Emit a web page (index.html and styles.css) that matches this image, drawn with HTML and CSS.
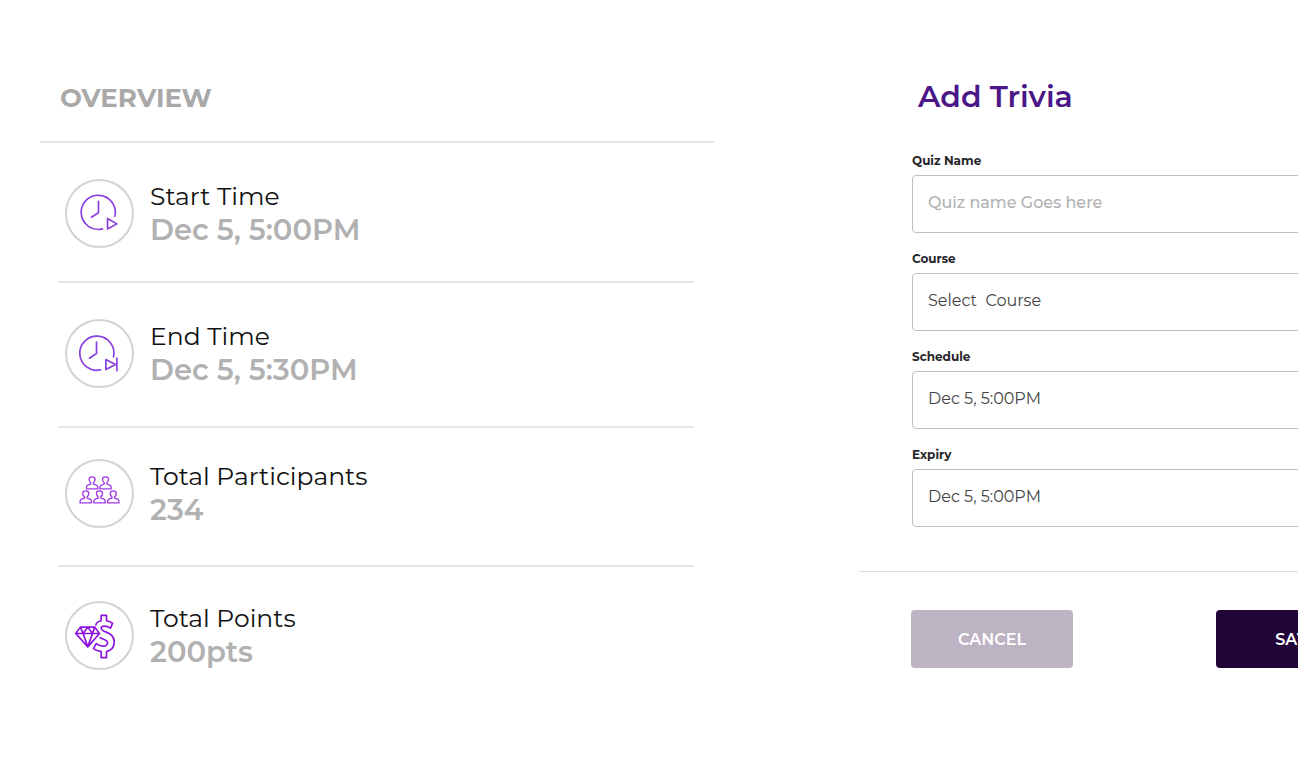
FILE: index.html
```
<!DOCTYPE html>
<html lang="en">
<head>
    <meta charset="UTF-8">
    <meta name="viewport" content="width=device-width, initial-scale=1.0">
    <title>Add Trivia</title>
    <link rel="stylesheet" href="styles.css">
</head>
<body>
    <main class="page">
        <section class="overview">
            <h2 class="overview-title">OVERVIEW</h2>

            <ul class="overview-list">
                <li class="overview-item">
                    <svg class="overview-icon" viewBox="30 26 206 206" aria-hidden="true">
                        <circle class="ring" cx="133" cy="129" r="100"/>
                        <path d="M179 137A51 51 0 1 0 142 175M130 93V127L109 140M157 144V175L185 160Z"/>
                    </svg>
                    <div class="overview-text">
                        <span class="overview-label">Start Time</span>
                        <span class="overview-value">Dec 5, 5:00PM</span>
                    </div>
                </li>
                <li class="overview-item">
                    <svg class="overview-icon" viewBox="30 26 206 206" aria-hidden="true">
                        <circle class="ring" cx="133" cy="129" r="100"/>
                        <path d="M175 139A51 51 0 1 0 136 178M124 95V129L103 143M152 147V177L181 162ZM185 143V180"/>
                    </svg>
                    <div class="overview-text">
                        <span class="overview-label">End Time</span>
                        <span class="overview-value">Dec 5, 5:30PM</span>
                    </div>
                </li>
                <li class="overview-item">
                    <svg class="overview-icon people" viewBox="30 26 206 206" aria-hidden="true">
                        <defs>
                            <path id="person" d="M-4 12C-8 9-9 5-9 1C-9-8 9-8 9 1C9 5 8 9 4 12V16L13 19Q17 21 17 26V30H-17V26Q-17 21-13 19L-4 16Z"/>
                        </defs>
                        <circle class="ring" cx="133" cy="129" r="100"/>
                        <use href="#person" x="111" y="85"/>
                        <use href="#person" x="151" y="85"/>
                        <use href="#person" x="92" y="127"/>
                        <use href="#person" x="133" y="127"/>
                        <use href="#person" x="174" y="127"/>
                    </svg>
                    <div class="overview-text">
                        <span class="overview-label">Total Participants</span>
                        <span class="overview-value">234</span>
                    </div>
                </li>
                <li class="overview-item">
                    <svg class="overview-icon points" viewBox="30 26 206 206" aria-hidden="true">
                        <circle class="ring" cx="133" cy="129" r="100"/>
                        <path d="M76 104H119L133 123L98 163L62 123ZM62 123H133M76 104L84 123L98 163L112 123L119 104M84 123L98 104L112 123"/>
                        <path d="M122 97C124 91 130 87 138 85V69H154V85Q164 87 172 92L166 107C155 100 139 98 138 107C138 121 177 116 177 148C177 165 167 174 154 177V195H138V177Q125 175 115 168L123 153C134 162 157 165 157 151C157 142 145 141 135 136"/>
                    </svg>
                    <div class="overview-text">
                        <span class="overview-label">Total Points</span>
                        <span class="overview-value">200pts</span>
                    </div>
                </li>
            </ul>
        </section>

        <form class="trivia">
            <h1 class="trivia-title">Add Trivia</h1>

            <div class="trivia-fields">
                <div class="field">
                    <label for="quiz-name">Quiz Name</label>
                    <input type="text" id="quiz-name" placeholder="Quiz name Goes here">
                </div>
                <div class="field">
                    <label for="course">Course</label>
                    <select id="course">
                        <option>Select&nbsp; Course</option>
                    </select>
                </div>
                <div class="field">
                    <label for="schedule">Schedule</label>
                    <input type="text" id="schedule" value="Dec 5, 5:00PM">
                </div>
                <div class="field">
                    <label for="expiry">Expiry</label>
                    <input type="text" id="expiry" value="Dec 5, 5:00PM">
                </div>
            </div>

            <div class="trivia-actions">
                <button type="button" class="btn cancel">CANCEL</button>
                <button type="submit" class="btn save">SAVE</button>
            </div>
        </form>
    </main>
</body>
</html>
```
FILE: styles.css
```
* {
    box-sizing: border-box;
}

body {
    margin: 0;
    background: #fff;
    color: #111;
    font-family: Gotham, Montserrat, Inter, sans-serif;
}

.page {
    display: flex;
    align-items: flex-start;
    gap: 145px;
    min-height: 100vh;
    padding: 80px 0 40px 40px;
    overflow: hidden;
}

/* Overview */
.overview {
    flex: 1;
    min-width: 0;
}

.overview-title {
    margin: 0;
    padding: 0 20px 25px;
    border-bottom: 2px solid #e6e6e6;
    color: #a9a9a9;
    font-size: 26px;
    font-weight: 700;
    line-height: 36px;
}

.overview-list {
    margin: 0;
    padding: 0 20px 0 18px;
    list-style: none;
}

.overview-item {
    display: flex;
    align-items: center;
    gap: 16px;
    padding: 36px 7px 33px;
    border-bottom: 2px solid #e6e6e6;
}

.overview-item:nth-child(2) {
    padding-bottom: 38px;
}

.overview-item:nth-child(3) {
    padding-top: 31px;
    padding-bottom: 37px;
}

.overview-item:last-child {
    padding-top: 34px;
    border-bottom: none;
}

.overview-icon {
    flex: none;
    width: 69px;
    height: 69px;
    fill: none;
    stroke: #8a3fe0;
    stroke-width: 5;
    stroke-linecap: round;
    stroke-linejoin: round;
}

.overview-icon .ring {
    stroke: #d3d3d3;
    stroke-width: 6;
}

.overview-icon.people {
    stroke: #a23ae8;
    stroke-width: 4;
}

.overview-icon.points {
    stroke: #8d14e0;
}

.overview-text {
    display: flex;
    flex-direction: column;
    padding-bottom: 2px;
    line-height: 33px;
}

.overview-label {
    font-size: 25px;
}

.overview-value {
    color: #b1b1b1;
    font-size: 29px;
    font-weight: 600;
}

/* Add trivia form, runs past the right edge of the window */
.trivia {
    flex: 0 0 572px;
    margin-right: -133px;
}

.trivia-title {
    margin: 0;
    padding: 0 59px;
    color: #4b1687;
    font-size: 30px;
    font-weight: 600;
    line-height: 34px;
}

.trivia-fields {
    display: flex;
    flex-direction: column;
    gap: 19px;
    padding: 40px 53px 44px;
    border-bottom: 1px solid #dedede;
}

.field {
    display: flex;
    flex-direction: column;
    gap: 7px;
}

.field label {
    color: #26262b;
    font-size: 12px;
    font-weight: 700;
    line-height: 14px;
}

.field input,
.field select {
    width: 100%;
    height: 58px;
    padding: 0 15px 4px;
    border: 1px solid #bfbfbf;
    border-radius: 4px;
    background: #fff;
    color: #444;
    font-family: inherit;
    font-size: 16px;
    appearance: none;
}

.field input::placeholder {
    color: #b1b1b1;
    font-weight: 500;
}

.trivia-actions {
    display: flex;
    justify-content: space-between;
    padding: 38px 53px 0 52px;
}

.btn {
    width: 162px;
    height: 58px;
    border: none;
    border-radius: 4px;
    color: #fff;
    font-family: inherit;
    font-size: 16px;
    font-weight: 600;
    cursor: pointer;
}

.btn.cancel {
    background: #bcb3c3;
}

.btn.save {
    background: #220337;
}
```
